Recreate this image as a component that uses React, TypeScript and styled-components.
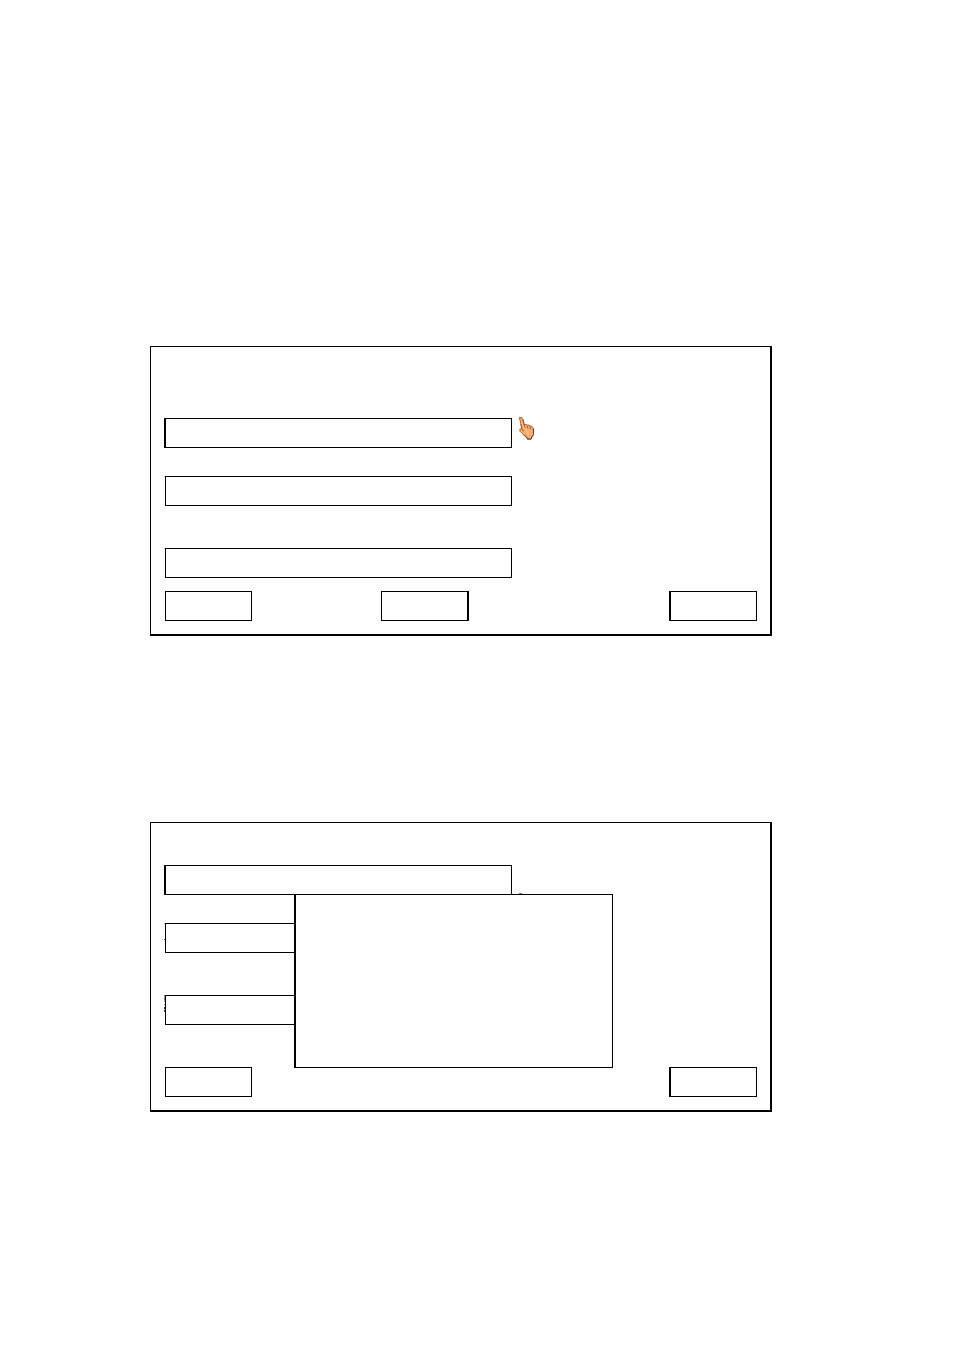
import React from "react";
import styled, { createGlobalStyle } from "styled-components";

const GlobalStyle = createGlobalStyle`
  *, *::before { box-sizing: border-box; }
  body { margin: 0; background: #fff; font-family: "Liberation Sans", Arial, sans-serif; }
`;

const Page = styled.main`
  display: flex;
  flex-direction: column;
  gap: 186px;
  padding: 346px 182px 238px 150px;
`;

const Panel = styled.form<{ $top: number }>`
  position: relative;
  display: flex;
  flex-direction: column;
  padding: ${(p) => p.$top}px 13px 13px;
  border: solid #000;
  border-width: 1px 2px 2px 1px;
`;

type EdgeKind = "solid" | "corner" | "dot" | "worn";

const edges: Record<EdgeKind, string> = {
  solid: "#000",
  corner: "linear-gradient(#aaa 1px, transparent 1px)",
  dot: "linear-gradient(#aaa 1px, transparent 1px 16px, #444 16px 17px, transparent 17px)",
  worn: "linear-gradient(#999 0 3px, #777 3px 5px, #aaa 5px 7px, transparent 7px 9px, #999 9px 10px, transparent 10px 12px, #222 12px 14px, #ccc 14px 15px, #444 15px 17px, transparent 17px)",
};

const FieldRow = styled.div<{ $after: number; $edge: EdgeKind }>`
  position: relative;
  display: flex;
  width: 100%;
  max-width: 348px;
  margin-bottom: ${(p) => p.$after}px;

  &::before {
    content: "";
    flex: 0 0 1px;
    background: ${(p) => edges[p.$edge]};
  }
`;

const TextField = styled.input`
  flex: 1;
  min-width: 0;
  height: 30px;
  margin: 0;
  padding: 0 8px;
  border: 1px solid #000;
  border-radius: 0;
  background: #fff;
  font: 14px "Liberation Sans", Arial, sans-serif;
  outline: none;
`;

const Actions = styled.div`
  display: grid;
  grid-template-columns: 216px 1fr auto;
  padding-left: 1px;
`;

const ActionButton = styled.button<{ $heavy?: "left" | "right"; $column: number }>`
  grid-column: ${(p) => p.$column};
  width: ${(p) => (p.$heavy ? 88 : 87)}px;
  height: 30px;
  padding: 0;
  border: 1px solid #000;
  border-left-width: ${(p) => (p.$heavy === "left" ? 2 : 1)}px;
  border-right-width: ${(p) => (p.$heavy === "right" ? 2 : 1)}px;
  border-radius: 0;
  background: #fff;
`;

const Popup = styled.section`
  position: absolute;
  top: 71px;
  left: 143px;
  width: 319px;
  height: 174px;
  border: 1px solid #000;
  border-left-width: 2px;
  background: #fff;
`;

const Pointer = styled.svg<{ $top: number }>`
  position: absolute;
  top: ${(p) => p.$top}px;
  left: 354px;
  width: 17px;
  height: 24px;
`;

function Hand({ top }: { top: number }) {
  return (
    <Pointer $top={top} viewBox="0 0 17 24" aria-hidden="true">
      <path
        d="M1.5 2 L3.5 1.5 L5 3.5 L6.5 9 L8 8.3 L9.4 9.2 L11 9 L12 10 L13.5 10 L15.3 12.4 L15.5 18.5 L13.8 21 L13.3 23 L9.5 23.3 L8.5 21 L5.5 18.8 L2 15.3 L1.8 13.3 L3.3 12.8 L3.8 11 L2.7 7 Z"
        fill="#f4ad72"
        stroke="#ad6434"
        strokeWidth="1"
        strokeLinejoin="round"
      />
      <path d="M3.3 4 L5.2 11 L8 14 L11 19" fill="none" stroke="#ffc890" strokeWidth="1" />
      <path d="M4.6 3.5 L6.2 9.5 L7.2 12 M9.3 9.5 L9.8 12.5 M12 10.3 L12.5 13" fill="none" stroke="#a9602f" strokeWidth="1" />
      <path d="M2.7 8 L3.9 12.5 L5.5 15.5" fill="none" stroke="#a9602f" strokeWidth="1" />
      <path d="M5.5 18.8 L8.5 21 L9.5 23 L13.2 23 L13.8 21 L15.5 18.5 L15.5 12.5" fill="none" stroke="#70452b" strokeWidth="1" />
      <path d="M1 1 H4 V2 H1 Z" fill="#a07050" />
    </Pointer>
  );
}

type Row = { label: string; after: number; edge: EdgeKind; pointerTop?: number };

function Fields({ rows }: { rows: Row[] }) {
  return (
    <>
      {rows.map((row) => (
        <FieldRow key={row.label} $after={row.after} $edge={row.edge}>
          <TextField type="text" aria-label={row.label} />
          {row.pointerTop !== undefined && <Hand top={row.pointerTop} />}
        </FieldRow>
      ))}
    </>
  );
}

const upperRows: Row[] = [
  { label: "First field", after: 28, edge: "solid", pointerTop: -2 },
  { label: "Second field", after: 42, edge: "corner" },
  { label: "Third field", after: 13, edge: "corner" },
];

const lowerRows: Row[] = [
  { label: "First field", after: 28, edge: "solid", pointerTop: 27 },
  { label: "Second field", after: 42, edge: "dot" },
  { label: "Third field", after: 42, edge: "worn" },
];

export default function App() {
  return (
    <>
      <GlobalStyle />
      <Page>
        <Panel $top={71} aria-label="Entry form">
          <Fields rows={upperRows} />
          <Actions>
            <ActionButton type="button" aria-label="Left action" $column={1} />
            <ActionButton type="button" aria-label="Middle action" $column={2} $heavy="right" />
            <ActionButton type="button" aria-label="Right action" $column={3} $heavy="left" />
          </Actions>
        </Panel>
        <Panel $top={42} aria-label="Entry form with popup">
          <Fields rows={lowerRows} />
          <Actions>
            <ActionButton type="button" aria-label="Left action" $column={1} />
            <ActionButton type="button" aria-label="Right action" $column={3} $heavy="left" />
          </Actions>
          <Popup aria-label="Popup" />
        </Panel>
      </Page>
    </>
  );
}
